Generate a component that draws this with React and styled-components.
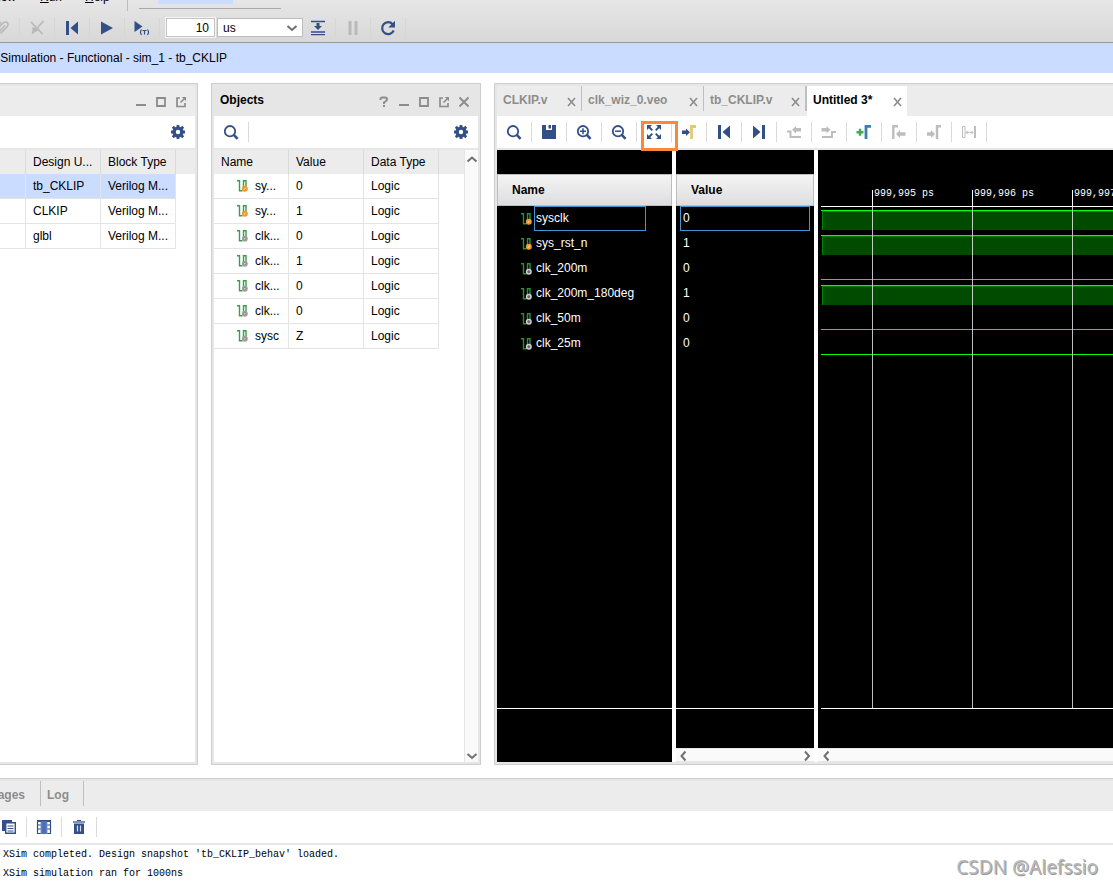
import React from "react";
import styled, { createGlobalStyle, css } from "styled-components";

const NAVY = "#324f87";
const GREY = "#8c8c8c";
const OFF = "#bdbdbd";
const LINE = "#e4e4e4";
const SELECT = "#cadcff";

const Global = createGlobalStyle`
  *, *::before, *::after { box-sizing: border-box; }
  html, body, #root { height: 100%; margin: 0; }
  body { background: #fff; color: #000; font: 12px/16px "Liberation Sans", Arial, sans-serif; overflow: hidden; }
  button { font: inherit; color: inherit; background: none; border: 0; padding: 0; margin: 0; }
  svg { display: block; flex: none; }
  ul { list-style: none; margin: 0; padding: 0; }
`;

/* ---------- page frame ---------- */
const Page = styled.div`
  display: flex;
  flex-direction: column;
  height: 100vh;
  overflow: hidden;
  position: relative;
`;
const Header = styled.header`
  flex: none;
  background: linear-gradient(#e6e6e6, #d8d8d8);
  border-bottom: 1px solid #999;
`;
const MenuBar = styled.nav`
  display: flex;
  height: 12px;
  overflow: hidden;
  align-items: flex-end;
`;
const MenuItem = styled.button`
  width: ${(p) => p.$w}px;
  flex: none;
  height: 16px;
  margin-bottom: 7px;
  display: flex;
  justify-content: ${(p) => (p.$align === "right" ? "flex-end" : "flex-start")};
`;
const MenuGap = styled.span`
  flex: none;
  width: 24px;
`;
const MenuRule = styled.span`
  width: 1px;
  height: 11px;
  align-self: flex-start;
  background: #bbb;
`;
const QuickAccess = styled.div`
  width: 142px;
  height: 9px;
  margin-left: 11px;
  padding: 0 48px 0 19px;
  align-self: flex-start;
  border-bottom: 1px solid #a8a8a8;
`;
const QuickMark = styled.div`
  height: 4px;
  background: ${SELECT};
`;
const RunBar = styled.div`
  display: flex;
  align-items: center;
  height: 30px;
  padding-top: 1px;
  margin-left: -15px;
`;
const RunButton = styled.button`
  width: 35px;
  height: 20px;
  flex: none;
  display: flex;
  align-items: center;
  justify-content: center;
  border-right: 1px solid #d6d6d6;
`;
const TimeInput = styled.input`
  width: 49px;
  height: 19px;
  margin: 0 2px 0 6px;
  padding: 0 5px;
  border: 1px solid #c4c4c4;
  outline: 1px solid #f4f4f4;
  background: #fff;
  font: inherit;
  text-align: right;
`;
const UnitBox = styled.div`
  position: relative;
  width: 86px;
  height: 19px;
  margin-right: -2px;
`;
const UnitSelect = styled.select`
  appearance: none;
  width: 100%;
  height: 100%;
  padding: 0 5px;
  border: 1px solid #bcbcbc;
  border-radius: 0;
  background: #fff;
  color: #000;
  font: inherit;
`;
const UnitArrow = styled.span`
  position: absolute;
  right: 5px;
  top: 4px;
  pointer-events: none;
`;
const ModeBar = styled.div`
  flex: none;
  height: 30px;
  width: 100%;
  background: ${SELECT};
  display: flex;
`;
const ModeText = styled.div`
  width: 227px;
  line-height: 30px;
  display: flex;
  justify-content: flex-end;
  overflow: hidden;
  white-space: nowrap;
`;
const Workspace = styled.main`
  flex: 1;
  min-height: 0;
  display: flex;
  gap: 13px;
  padding: 10px 0 13px;
`;

/* ---------- panels ---------- */
const Panel = styled.section`
  display: flex;
  flex-direction: column;
  min-width: 0;
  overflow: hidden;
  border: 1px solid #cecece;
  padding: 2px;
  background: #e6e6e6;
  ${(p) => (p.$w ? css`flex: none; width: ${p.$w}px;` : css`flex: 1;`)}
  ${(p) => p.$openLeft && css`border-left: 0; padding-left: 0;`}
  ${(p) => p.$openRight && css`border-right: 0; padding-right: 0;`}
`;
const TitleBar = styled.div`
  flex: none;
  height: 30px;
  display: flex;
  align-items: center;
  padding: 0 4px 0 6px;
  background: ${(p) => (p.$active ? "#e6e6e6" : "#ececec")};
`;
const Title = styled.h2`
  flex: 1;
  margin: 0;
  font-size: 12px;
  line-height: 28px;
  height: 30px;
`;
const TitleButton = styled.button`
  width: 20px;
  height: 20px;
  margin-top: 2px;
  display: flex;
  align-items: center;
  justify-content: center;
`;
const ToolBar = styled.div`
  flex: none;
  height: 34px;
  display: flex;
  align-items: center;
  background: #fff;
  border-bottom: 2px solid #e6e6e6;
  ${(p) => p.$shift && css`margin-left: -8px;`}
`;
const Tool = styled.button`
  position: relative;
  width: 35px;
  height: 20px;
  flex: none;
  display: flex;
  align-items: center;
  justify-content: center;
  border-right: 1px solid #dadada;
`;
const GearButton = styled.button`
  width: 34px;
  height: 20px;
  margin-left: auto;
  display: flex;
  align-items: center;
  justify-content: center;
`;
const Callout = styled.span`
  position: absolute;
  z-index: 2;
  left: 4px;
  top: -1px;
  width: 37px;
  height: 30px;
  border: 3px solid #f9893a;
  pointer-events: none;
`;
const PanelBody = styled.div`
  flex: 1;
  min-height: 0;
  display: flex;
  background: #fff;
`;

/* ---------- tables ---------- */
const Grid = styled.table`
  flex: 1;
  width: 100%;
  align-self: flex-start;
  table-layout: fixed;
  border-collapse: separate;
  border-spacing: 0;
`;
const Th = styled.th`
  width: ${(p) => (p.$w ? p.$w + "px" : "auto")};
  height: 24px;
  padding: 0 0 0 7px;
  text-align: left;
  font-weight: normal;
  background: #ececec;
  border-right: ${(p) => (p.$w ? "1px solid #dadada" : "0")};
  white-space: nowrap;
`;
const Td = styled.td`
  height: 25px;
  padding: 0 0 1px 7px;
  border-right: 1px solid ${LINE};
  border-bottom: 1px solid ${LINE};
  background: ${(p) => (p.$on ? SELECT : "#fff")};
  white-space: nowrap;
  overflow: hidden;
`;
const ObjectName = styled.span`
  display: flex;
  align-items: center;
  gap: 6px;
  padding-left: 16px;
`;

/* ---------- scroll bars ---------- */
const VScroll = styled.div`
  flex: none;
  width: 14px;
  display: flex;
  flex-direction: column;
  justify-content: space-between;
  background: #fafafa;
  border-left: 1px solid #e6e6e6;
  padding: 2px 0 0;
`;
const HScroll = styled.div`
  flex: none;
  height: 14px;
  display: flex;
  justify-content: space-between;
  padding: 0 ${(p) => (p.$inset ? 1 : 0)}px;
  background: #fafafa;
  border-top: 1px solid #e6e6e6;
  border-bottom: 1px solid #e6e6e6;
`;
const ScrollButton = styled.button`
  width: 14px;
  height: 13px;
  display: flex;
  align-items: center;
  justify-content: center;
`;

/* ---------- wave window ---------- */
const Tabs = styled.div`
  flex: none;
  height: 30px;
  display: flex;
  background: #ececec;
`;
const Tab = styled.div`
  width: ${(p) => p.$w}px;
  height: ${(p) => (p.$on ? 30 : 25)}px;
  flex: none;
  display: flex;
  justify-content: space-between;
  padding: 0 4px 0 6px;
  line-height: 28px;
  font-weight: bold;
  color: ${(p) => (p.$on ? "#000" : GREY)};
  background: ${(p) => (p.$on ? "#fff" : "transparent")};
  border-right: ${(p) => (p.$on ? 0 : p.$thick ? 2 : 1)}px solid #bfbfbf;
`;
const TabName = styled.button`
  font-weight: bold;
  height: 28px;
`;
const TabClose = styled.button`
  width: 12px;
  height: 28px;
  padding-top: 4px;
  display: flex;
  align-items: center;
  justify-content: center;
`;
const WaveBody = styled.div`
  flex: 1;
  min-height: 0;
  display: flex;
  gap: 4px;
  background: #fff;
`;
const WaveColumn = styled.div`
  display: flex;
  flex-direction: column;
  min-width: 0;
  background: #000;
  color: #fff;
  ${(p) => (p.$w ? css`flex: none; width: ${p.$w}px;` : css`flex: 1;`)}
`;
const WaveMain = styled.div`
  flex: 1;
  min-height: 0;
  overflow: hidden;
  padding: ${(p) => (p.$plot ? "0 0 0 3px" : "24px 0 0")};
`;
const WaveFoot = styled.div`
  flex: none;
  height: ${(p) => p.$h}px;
  margin-left: ${(p) => (p.$plot ? 3 : 0)}px;
  border-top: 1px solid #fff;
`;
const WaveHead = styled.div`
  height: 32px;
  padding-left: 14px;
  line-height: 30px;
  font-weight: bold;
  color: #000;
  background: linear-gradient(#f4f4f4, #dedee0);
  border: 1px solid #bdbdbd;
`;
const WaveRow = styled.li`
  height: 25px;
  display: flex;
  align-items: center;
  padding: ${(p) => (p.$value ? "0 4px" : "0 26px 0 24px")};
`;
const WaveLabel = styled.span`
  flex: 1;
  height: 25px;
  padding: 0 ${(p) => (p.$value ? 2 : 1)}px;
  margin-left: ${(p) => (p.$value ? 0 : 1)}px;
  line-height: 22px;
  border: 1px solid ${(p) => (p.$on ? "#4593cf" : "transparent")};
`;
const Plot = styled.svg`
  width: 100%;
  height: 100%;
`;
const RulerText = styled.text`
  font: 10px "Liberation Mono", monospace;
  fill: #fff;
`;

/* ---------- console ---------- */
const Console = styled.section`
  flex: none;
  height: 107px;
  border-top: 1px solid #cecece;
  overflow: hidden;
`;
const ConsoleTabs = styled.div`
  height: 32px;
  display: flex;
  background: #ececec;
  border-top: 2px solid #e6e6e6;
`;
const ConsoleTab = styled.button`
  width: ${(p) => p.$w}px;
  height: 25px;
  padding: ${(p) => (p.$cut ? "2px 15px 0 0" : "2px 0 0 6px")};
  display: flex;
  justify-content: ${(p) => (p.$cut ? "flex-end" : "flex-start")};
  align-items: center;
  overflow: hidden;
  font-weight: bold;
  color: ${GREY};
  border-right: 1px solid #bfbfbf;
`;
const Log = styled.pre`
  margin: 0;
  padding-left: 3px;
  font: 10px/19px "Liberation Mono", monospace;
`;
const Watermark = styled.div`
  position: absolute;
  right: 15px;
  bottom: 4px;
  font: 19px/28px "Noto Sans", sans-serif;
  color: #b8b8b8;
  text-shadow: 1px 1px 0 #999;
`;

/* ---------- icons ---------- */
const Svg = ({ s = 16, children, ...r }) => (
  <svg width={s} height={s} viewBox={`0 0 ${s} ${s}`} fill="none" aria-hidden="true" {...r}>
    {children}
  </svg>
);
const Search = ({ sign }) => (
  <Svg stroke={NAVY}>
    <circle cx="7" cy="7.2" r="5.2" strokeWidth="1.8" />
    <path d="M11 11.2l3.600 3.600" strokeWidth="2.600" />
    {sign && <path d={sign === "+" ? "M4 7.2h6M7 4.2v6" : "M4 7.2h6"} strokeWidth="1.5" />}
  </Svg>
);
const Gear = () => (
  <Svg stroke={NAVY}>
    <circle cx="8" cy="8" r="3.9" strokeWidth="3.4" />
    <path
      d="M8 1v2.5M8 12.5V15M1 8h2.5M12.5 8H15M2.8 2.8l1.9 1.9M11.300 11.300l1.900 1.900M2.800 13.200l1.900-1.900M11.300 4.700l1.900-1.900"
      strokeWidth="2.8"
    />
  </Svg>
);
const Save = () => (
  <Svg>
    <path fill={NAVY} d="M1 1h4v5h6V1h4v14H1z" />
    <path fill={NAVY} d="M7.500 1h2.500v3.500H7.500z" />
  </Svg>
);
const Fit = () => (
  <Svg>
    <path fill={NAVY} d="M1 1h5L1 6zM15 1v5l-5-5zM1 15v-5l5 5zM15 15h-5l5-5z" />
    <path d="M3 3l3.300 3.300M13 3L9.700 6.300M3 13l3.300-3.300M13 13L9.700 9.700" stroke={NAVY} strokeWidth="1.900" />
  </Svg>
);
const GoCursor = () => (
  <Svg>
    <path fill={NAVY} d="M1 6.600h4V4.500l4 3.800-4 3.800V10H1z" />
    <path d="M10.500 15V2.500H15" stroke="#e3ca70" strokeWidth="2.800" />
  </Svg>
);
const ToStart = () => (
  <Svg>
    <path fill={NAVY} d="M2 1h3v14H2zM14 1.500v13L6.500 8z" />
  </Svg>
);
const ToEnd = () => (
  <Svg>
    <path fill={NAVY} d="M11 1h3v14h-3zM2 1.500v13L9.500 8z" />
  </Svg>
);
const PrevEdge = () => (
  <Svg>
    <path d="M1 7.500h3.500V13h10.500" stroke={OFF} strokeWidth="2" />
    <path fill={OFF} d="M6 5.700L10 2v2h5v3.500h-5v2z" />
  </Svg>
);
const NextEdge = () => (
  <Svg>
    <path d="M1 13h10V8h4" stroke={OFF} strokeWidth="2" />
    <path fill={OFF} d="M9.500 5.700L5.500 2v2h-5v3.500h5v2z" />
  </Svg>
);
const AddMarker = () => (
  <Svg>
    <path d="M.5 8.200h7M4 4.700v7" stroke="#3fae49" strokeWidth="2.400" />
    <path d="M10 15V2.300H15" stroke="#3b7fb5" strokeWidth="2.800" />
  </Svg>
);
const PrevMarker = () => (
  <Svg>
    <path d="M2.300 15V2.300H7" stroke={OFF} strokeWidth="2.400" />
    <path fill={OFF} d="M5 10l4-4v2.200h5.500v3.600H9V14z" />
  </Svg>
);
const NextMarker = () => (
  <Svg>
    <path d="M11 15V2.300h4" stroke={OFF} strokeWidth="2.400" />
    <path fill={OFF} d="M9 10L5 6v2.200H1v3.600h4V14z" />
  </Svg>
);
const Span = () => (
  <Svg stroke={OFF}>
    <path d="M1.500 2.500H4v11H1.500z" />
    <path d="M14 2v12" strokeWidth="2" />
    <path d="M5 8.500h7M7 6.500l-2 2 2 2M10 6.500l2 2-2 2" />
  </Svg>
);
const Minimize = () => <Svg stroke={GREY}><path d="M3 11h10" strokeWidth="2" /></Svg>;
const Maximize = () => <Svg stroke={GREY}><path d="M4 4h8v8H4z" strokeWidth="1.800" /></Svg>;
const PopOut = () => (
  <Svg stroke={GREY}>
    <path d="M7 4H4v8.500h8V9" strokeWidth="1.700" />
    <path d="M7.500 8.500L11 5" strokeWidth="1.600" />
    <path d="M8.800 3H13v4.200z" fill={GREY} stroke="none" />
  </Svg>
);
const Cross = ({ s = 16 }) => (
  <Svg s={s} stroke={GREY} strokeWidth={s === 16 ? 1.9 : 1.6}>
    <path d={s === 16 ? "M3.500 3.500l9 9M12.500 3.500l-9 9" : "M3 2l7 8M10 2L3 10"} />
  </Svg>
);
const Help = () => (
  <Svg stroke={GREY} strokeWidth="2">
    <path d="M4.500 6V5q0-1.500 2-1.500h2.500q2 0 2 1.700T8 8.500V10" />
    <path d="M8 11v2" />
  </Svg>
);
const CHEVRONS = {
  up: "M1.500 8.500L6 4.500l4.500 4",
  down: "M1.500 4L6 8l4.500-4",
  left: "M8.500 1.500L4.500 6l4 4.500",
  right: "M4 1.500L8 6l-4 4.500",
};
const Chevron = ({ dir }) => (
  <Svg s={12} stroke="#707070" strokeWidth="2">
    <path d={CHEVRONS[dir]} />
  </Svg>
);
const Signal = ({ input, dark }) => (
  <Svg s={12}>
    <path
      d="M0 .8h2.500v10h3M6.500 10V.8h2.500V7"
      stroke={dark ? "#2a8f3d" : "#35a047"}
      strokeWidth="1.400"
    />
    <circle cx="7.800" cy="8.700" r="3" fill={input ? "#f0962f" : dark ? "#d0d0d0" : "#a2a2a2"} />
    {input ? (
      <path d="M7 9.800l1.600-2.200" stroke="#ffe0ae" />
    ) : (
      <circle cx="7.800" cy="8.700" r="1.200" fill={dark ? "#666" : "#e0e0e0"} stroke="#666" strokeWidth=".6" />
    )}
  </Svg>
);
const Plug = ({ crossed }) => (
  <Svg stroke="#b9b9b9">
    {crossed ? (
      <>
        <path d="M2 2l11.500 12M14.500 1L9 7" strokeWidth="1.800" />
        <path d="M3 7.500h7l-1 3-6.500 4 1-4.500z" fill="#b9b9b9" stroke="none" />
      </>
    ) : (
      <path d="M2 10l7-7q3-2 4.500 0t-1 4.500l-6 6M5 12l6-6.500M2 7l5-5" strokeWidth="1.600" />
    )}
  </Svg>
);
const Play = () => <Svg><path fill={NAVY} d="M2 1.500v13L14 8z" /></Svg>;
const PlayFor = () => (
  <Svg>
    <path fill={NAVY} d="M.5 1v11l8-5.500z" />
    <path d="M7.500 9.500q-2 2.800 0 5.500M13.500 9.500q2 2.800 0 5.500M8.500 10.500h4M10.500 10.500v4" stroke={NAVY} strokeWidth="1.200" />
  </Svg>
);
const Step = () => (
  <Svg>
    <path d="M1 1.500h14M1 12h14M1 14.700h14" stroke={NAVY} strokeWidth="1.300" />
    <path fill={NAVY} d="M6.500 3h3v3H12l-4 4-4-4h2.500z" />
  </Svg>
);
const Pause = () => <Svg><path fill="#b9b9b9" d="M3.500 1h3v14h-3zM9.500 1h3v14h-3z" /></Svg>;
const Restart = () => (
  <Svg>
    <path d="M12.700 4.200A6 6 0 1 0 13.700 10.500" stroke={NAVY} strokeWidth="2.200" />
    <path fill={NAVY} d="M15 .8v6.700H8.300z" />
  </Svg>
);
const Copy = () => (
  <Svg>
    <path fill={NAVY} d="M1 1h10v2H4v9H1z" />
    <path d="M4.700 3.700h9.600v10.600H4.700z" fill="#fff" stroke={NAVY} strokeWidth="1.400" />
    <path d="M6.500 7h6M6.500 9.500h6M6.500 12h6" stroke={NAVY} strokeWidth="1.200" />
  </Svg>
);
const Columns = () => (
  <Svg stroke={NAVY}>
    <path d="M1 2h14" strokeWidth="2" />
    <path d="M1.500 2v13M14.500 2v13M1 6h14M1 10h14M1 14.500h14" strokeWidth="1.200" />
    <path d="M5 2h6v13H5z" fill="#4c6fb5" stroke="none" />
    <path d="M5 3v12M11 3v12" stroke="#7f97c6" />
  </Svg>
);
const Trash = () => (
  <Svg>
    <path fill={NAVY} d="M3 4.500h10V15H3zM6 1h4v2H6z" />
    <path d="M2 3h12" stroke="#7f92b8" strokeWidth="2" />
    <path d="M6.500 6.500v6M9.500 6.500v6" stroke="#d5ddec" strokeWidth="1.200" />
  </Svg>
);

/* ---------- data ---------- */
const scopes = [
  ["tb_CKLIP", "Verilog M..."],
  ["CLKIP", "Verilog M..."],
  ["glbl", "Verilog M..."],
];
const objects = [
  ["sy...", "0", true],
  ["sy...", "1", true],
  ["clk...", "0"],
  ["clk...", "1"],
  ["clk...", "0"],
  ["clk...", "0"],
  ["sysc", "Z"],
];
const signals = [
  { name: "sysclk", value: "0", input: true, high: true },
  { name: "sys_rst_n", value: "1", input: true, high: true },
  { name: "clk_200m", value: "0" },
  { name: "clk_200m_180deg", value: "1", high: true },
  { name: "clk_50m", value: "0" },
  { name: "clk_25m", value: "0" },
];
const ticks = ["999,995 ps", "999,996 ps", "999,997 ps"];
const waveTools = [
  ["Find", <Search />],
  ["Save", <Save />],
  ["Zoom in", <Search sign="+" />],
  ["Zoom out", <Search sign="-" />],
  ["Zoom fit", <Fit />],
  ["Go to cursor", <GoCursor />],
  ["Go to start", <ToStart />],
  ["Go to end", <ToEnd />],
  ["Previous transition", <PrevEdge />],
  ["Next transition", <NextEdge />],
  ["Add marker", <AddMarker />],
  ["Previous marker", <PrevMarker />],
  ["Next marker", <NextMarker />],
  ["Swap cursors", <Span />],
];
const tabs = [
  ["CLKIP.v", 85],
  ["clk_wiz_0.veo", 122],
  ["tb_CKLIP.v", 103],
  ["Untitled 3*", 100],
];

const TITLE_ICONS = { Help: <Help />, Minimize: <Minimize />, Maximize: <Maximize />, Float: <PopOut />, Close: <Cross /> };
const TitleButtons = ({ names }) =>
  names.map((n) => (
    <TitleButton key={n} aria-label={n}>
      {TITLE_ICONS[n]}
    </TitleButton>
  ));

function Waveform() {
  return (
    <Plot shapeRendering="crispEdges" role="img" aria-label="Signal waveforms">
      <rect x="0" y="56" width="100%" height="1" fill="#fff" />
      {signals.map((s, i) => {
        const y = 56 + i * 25;
        return s.high ? (
          <g key={s.name}>
            <rect x="1" y={y + 4} width="100%" height="20" fill="#004b00" />
            <rect x="1" y={y + 5} width="1" height="19" fill="#008000" />
            <rect x="1" y={y + 5} width="100%" height="1" fill="#008000" />
            <rect x="0" y={y + 4} width="100%" height="1" fill="#00ff00" />
          </g>
        ) : (
          <rect key={s.name} x="0" y={y + 23} width="100%" height="1" fill="#00ff00" />
        );
      })}
      {ticks.map((t, i) => (
        <g key={t}>
          <rect x={51 + i * 100} y="40" width="1" height="16" fill="#fff" />
          <rect x={51 + i * 100} y="57" width="1" height="100%" fill="#fff" opacity="0.75" />
          <RulerText x={53 + i * 100} y="46">
            {t}
          </RulerText>
        </g>
      ))}
    </Plot>
  );
}

export default function App() {
  return (
    <Page>
      <Global />
      <Header>
        <MenuBar aria-label="Main menu">
          <MenuItem $w={16} $align="right">Window</MenuItem>
          <MenuItem $w={45}><MenuGap /><u>R</u>un</MenuItem>
          <MenuItem $w={66}><MenuGap /><u>H</u>elp</MenuItem>
          <MenuRule />
          <QuickAccess><QuickMark /></QuickAccess>
        </MenuBar>
        <RunBar>
          <RunButton aria-label="Connect"><Plug /></RunButton>
          <RunButton aria-label="Disconnect"><Plug crossed /></RunButton>
          <RunButton aria-label="Restart"><ToStart /></RunButton>
          <RunButton aria-label="Run all"><Play /></RunButton>
          <RunButton aria-label="Run for time"><PlayFor /></RunButton>
          <TimeInput aria-label="Run time" defaultValue="10" />
          <UnitBox>
            <UnitSelect aria-label="Time unit" defaultValue="us">
              <option>ns</option>
              <option>us</option>
              <option>ms</option>
            </UnitSelect>
            <UnitArrow><Chevron dir="down" /></UnitArrow>
          </UnitBox>
          <RunButton aria-label="Step"><Step /></RunButton>
          <RunButton aria-label="Break"><Pause /></RunButton>
          <RunButton aria-label="Relaunch"><Restart /></RunButton>
        </RunBar>
      </Header>
      <ModeBar><ModeText>Simulation - Functional - sim_1 - tb_CKLIP</ModeText></ModeBar>

      <Workspace>
        <Panel $w={198} $openLeft aria-label="Scope">
          <TitleBar>
            <Title />
            <TitleButtons names={["Minimize", "Maximize", "Float"]} />
          </TitleBar>
          <ToolBar><GearButton aria-label="Settings"><Gear /></GearButton></ToolBar>
          <PanelBody>
            <Grid>
              <thead>
                <tr><Th $w={26} /><Th $w={75}>Design U...</Th><Th $w={75}>Block Type</Th><Th /></tr>
              </thead>
              <tbody>
                {scopes.map(([unit, type], i) => (
                  <tr key={unit}>
                    <Td $on={i === 0} />
                    <Td $on={i === 0}>{unit}</Td>
                    <Td $on={i === 0}>{type}</Td>
                  </tr>
                ))}
              </tbody>
            </Grid>
          </PanelBody>
        </Panel>

        <Panel $w={270} aria-label="Objects">
          <TitleBar $active>
            <Title>Objects</Title>
            <TitleButtons names={["Help", "Minimize", "Maximize", "Float", "Close"]} />
          </TitleBar>
          <ToolBar>
            <Tool aria-label="Find"><Search /></Tool>
            <GearButton aria-label="Settings"><Gear /></GearButton>
          </ToolBar>
          <PanelBody>
            <Grid>
              <thead>
                <tr><Th $w={75}>Name</Th><Th $w={75}>Value</Th><Th $w={75}>Data Type</Th><Th /></tr>
              </thead>
              <tbody>
                {objects.map(([name, value, input], i) => (
                  <tr key={i}>
                    <Td><ObjectName><Signal input={input} />{name}</ObjectName></Td>
                    <Td>{value}</Td>
                    <Td>Logic</Td>
                  </tr>
                ))}
              </tbody>
            </Grid>
            <VScroll>
              <ScrollButton aria-label="Scroll up"><Chevron dir="up" /></ScrollButton>
              <ScrollButton aria-label="Scroll down"><Chevron dir="down" /></ScrollButton>
            </VScroll>
          </PanelBody>
        </Panel>

        <Panel $openRight aria-label="Waveform">
          <Tabs>
            {tabs.map(([name, w], i) => (
              <Tab key={name} $w={w} $on={i === 3} $thick={i === 2}>
                <TabName>{name}</TabName>
                <TabClose aria-label={`Close ${name}`}><Cross s={12} /></TabClose>
              </Tab>
            ))}
          </Tabs>
          <ToolBar>
            {waveTools.map(([name, icon]) => (
              <Tool key={name} aria-label={name}>
                {icon}
                {name === "Zoom fit" && <Callout />}
              </Tool>
            ))}
          </ToolBar>
          <WaveBody>
            <WaveColumn $w={175}>
              <WaveMain>
                <WaveHead>Name</WaveHead>
                <ul>
                  {signals.map((s, i) => (
                    <WaveRow key={s.name}>
                      <Signal dark input={s.input} />
                      <WaveLabel $on={i === 0}>{s.name}</WaveLabel>
                    </WaveRow>
                  ))}
                </ul>
              </WaveMain>
              <WaveFoot $h={54} />
            </WaveColumn>
            <WaveColumn $w={138}>
              <WaveMain>
                <WaveHead>Value</WaveHead>
                <ul>
                  {signals.map((s, i) => (
                    <WaveRow key={s.name} $value>
                      <WaveLabel $value $on={i === 0}>{s.value}</WaveLabel>
                    </WaveRow>
                  ))}
                </ul>
              </WaveMain>
              <WaveFoot $h={40} />
              <HScroll>
                <ScrollButton aria-label="Scroll left"><Chevron dir="left" /></ScrollButton>
                <ScrollButton aria-label="Scroll right"><Chevron dir="right" /></ScrollButton>
              </HScroll>
            </WaveColumn>
            <WaveColumn>
              <WaveMain $plot><Waveform /></WaveMain>
              <WaveFoot $h={40} $plot />
              <HScroll $inset>
                <ScrollButton aria-label="Scroll left"><Chevron dir="left" /></ScrollButton>
              </HScroll>
            </WaveColumn>
          </WaveBody>
        </Panel>
      </Workspace>

      <Console aria-label="Console">
        <ConsoleTabs>
          <ConsoleTab $w={41} $cut>Messages</ConsoleTab>
          <ConsoleTab $w={43}>Log</ConsoleTab>
        </ConsoleTabs>
        <ToolBar $shift>
          <Tool aria-label="Copy"><Copy /></Tool>
          <Tool aria-label="Columns"><Columns /></Tool>
          <Tool aria-label="Clear"><Trash /></Tool>
        </ToolBar>
        <Log>{"XSim completed. Design snapshot 'tb_CKLIP_behav' loaded.\nXSim simulation ran for 1000ns"}</Log>
      </Console>
      <Watermark>CSDN @Alefssio</Watermark>
    </Page>
  );
}
